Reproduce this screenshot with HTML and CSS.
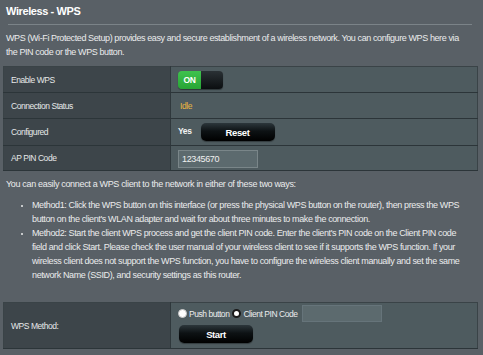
FILE: index.html
```html
<!DOCTYPE html>
<html lang="en">
<head>
  <meta charset="UTF-8">
  <meta name="viewport" content="width=device-width, initial-scale=1.0">
  <title>Wireless - WPS</title>
  <link rel="stylesheet" href="styles.css">
</head>
<body>
  <div class="page">
    <div class="title">Wireless - WPS</div>
    <div class="rule"></div>
    <p class="desc">WPS (Wi-Fi Protected Setup) provides easy and secure establishment of a wireless network. You can configure WPS here via the PIN code or the WPS button.</p>

    <table class="form">
      <tr class="row-enable">
        <th>Enable WPS</th>
        <td>
          <div class="toggle"><span class="toggle-on">ON</span><span class="toggle-off"></span></div>
        </td>
      </tr>
      <tr class="row-status">
        <th>Connection Status</th>
        <td><span class="status">Idle</span></td>
      </tr>
      <tr class="row-configured">
        <th>Configured</th>
        <td><span class="yes">Yes</span><button class="btn btn-reset">Reset</button></td>
      </tr>
      <tr class="row-pin">
        <th>AP PIN Code</th>
        <td><input class="field pin" type="text" value="12345670"></td>
      </tr>
    </table>

    <p class="intro">You can easily connect a WPS client to the network in either of these two ways:</p>
    <ul class="methods">
      <li>Method1: Click the WPS button on this interface (or press the physical WPS button on the router), then press the WPS button on the client's WLAN adapter and wait for about three minutes to make the connection.</li>
      <li>Method2: Start the client WPS process and get the client PIN code. Enter the client's PIN code on the Client PIN code field and click Start. Please check the user manual of your wireless client to see if it supports the WPS function. If your wireless client does not support the WPS function, you have to configure the wireless client manually and set the same network Name (SSID), and security settings as this router.</li>
    </ul>

    <table class="form method">
      <tr>
        <th>WPS Method:</th>
        <td>
          <div class="radios">
            <label><span class="radio"></span>Push button</label>
            <label><span class="radio checked"></span>Client PIN Code</label>
            <input class="field client-pin" type="text" value="">
          </div>
          <button class="btn btn-start">Start</button>
        </td>
      </tr>
    </table>
  </div>
</body>
</html>
```

FILE: styles.css
```css
body {
  margin: 0;
  padding: 0;
  background-color: #596066;
  font-family: 'Liberation Sans', Arial, sans-serif;
  color: #ebeced;
  overflow: hidden;
}

.page {
  width: 483px;
  height: 355px;
  padding-top: 3px;
  box-sizing: border-box;
}

.title {
  margin-left: 6px;
  font-size: 11px;
  letter-spacing: -0.4px;
  font-weight: bold;
  line-height: 16px;
  color: #ffffff;
}

.rule {
  margin: 5px 11px 0 8px;
  height: 1px;
  background-color: #7b8388;
}

.desc {
  margin: 6px 0 0 6px;
  width: 464px;
  font-size: 9px;
  letter-spacing: -0.4px;
  line-height: 14px;
}

/* form tables */
.form {
  margin: 7px 0 0 3px;
  width: 475px;
  border-collapse: collapse;
  font-size: 8.5px;
  letter-spacing: -0.45px;
  border: 1px solid #3a4347;
}

.form th {
  width: 159px;
  padding: 0 0 0 7px;
  text-align: left;
  font-weight: normal;
  background-color: #3d454a;
  color: #e6e8e9;
  border-bottom: 1px solid #2c3539;
  border-right: 1px solid #2f383c;
}

.form td {
  padding: 0 0 0 7px;
  background-color: #4e5b5f;
  border-bottom: 1px solid #2c3539;
}

.row-enable th, .row-enable td { height: 25px; }
.row-status th, .row-status td { height: 25px; }
.row-configured th, .row-configured td { height: 26px; }
.row-pin th, .row-pin td { height: 24px; }

.toggle {
  display: flex;
  width: 45px;
  height: 18px;
  margin-top: 1px;
  border-radius: 4px;
  overflow: hidden;
  box-shadow: 0 1px 1px rgba(0, 0, 0, 0.4);
}

.toggle-on {
  width: 23px;
  background: linear-gradient(#3fc24e, #27a535);
  color: #ffffff;
  font-weight: bold;
  font-size: 8.5px;
  letter-spacing: -0.37px;
  line-height: 18px;
  text-align: center;
}

.toggle-off {
  flex: 1;
  background: linear-gradient(#2a3135, #0b0e10);
}

.status {
  color: #e8b642;
  font-size: 8.5px;
  margin-left: 2px;
}

.yes {
  font-weight: bold;
  font-size: 8.5px;
  letter-spacing: -0.37px;
  color: #f2f2f2;
  margin-right: 9px;
}

.btn {
  font-family: 'Liberation Sans', Arial, sans-serif;
  font-weight: bold;
  font-size: 9.5px;
  letter-spacing: -0.4px;
  color: #ffffff;
  border: none;
  border-radius: 5px;
  background: linear-gradient(#2c363b 0%, #0d1214 45%, #000000 100%);
  box-shadow: 0 1px 1px rgba(0, 0, 0, 0.35);
  width: 74px;
  height: 18px;
  padding: 0;
  cursor: pointer;
  vertical-align: middle;
}

.field {
  box-sizing: border-box;
  height: 18px;
  padding: 0 3px;
  font-family: 'Liberation Sans', Arial, sans-serif;
  font-size: 9px;
  letter-spacing: -0.38px;
  color: #f0f0f0;
  background-color: #5c6a6e;
  border: 1px solid #7a8689;
  border-radius: 0;
  outline: none;
}

.pin {
  width: 80px;
  margin-top: 1px;
}

/* help text */
.intro {
  margin: 6px 0 0 6px;
  font-size: 9px;
  letter-spacing: -0.33px;
  line-height: 14px;
}

.methods {
  margin: 7px 0 0 0;
  padding-left: 32px;
  width: 434px;
  font-size: 9px;
  letter-spacing: -0.38px;
  line-height: 14px;
}

.methods li::marker {
  font-size: 8px;
}

/* method table */
.method {
  margin-top: 20px;
}

.method th, .method td {
  height: 45px;
}

.radios {
  display: flex;
  align-items: center;
  gap: 3px;
  margin-top: 1px;
}

.radios label {
  display: flex;
  align-items: center;
  gap: 2px;
}

.radio {
  width: 7px;
  height: 7px;
  border-radius: 50%;
  background-color: #ffffff;
  border: 1px solid #c8c8c8;
}

.radio.checked {
  background-color: #ffffff;
  border: 2px solid #1a1a1a;
  width: 5px;
  height: 5px;
}

.client-pin {
  width: 80px;
  height: 17px;
  margin-left: 1px;
  border-color: #66747a;
}

.btn-start {
  display: block;
  margin: 3px 0 4px 1px;
}
```
